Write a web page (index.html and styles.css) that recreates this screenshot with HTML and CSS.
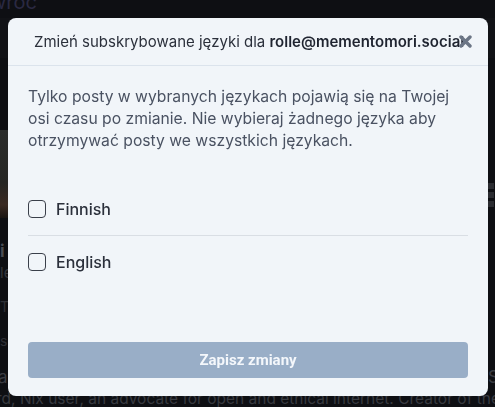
FILE: index.html
```html
<!DOCTYPE html>
<html lang="pl">
<head>
    <meta charset="UTF-8">
    <meta name="viewport" content="width=device-width, initial-scale=1.0">
    <title>Zmień subskrybowane języki</title>
    <link rel="stylesheet" href="styles.css">
</head>
<body>
    <!-- page behind the dialog -->
    <div class="page">
        <a class="backlink" href="#">wróć</a>
        <div class="topbar"></div>
        <div class="banner">
            <div class="banner-img"></div>
            <div class="banner-side">
                <span></span><span></span><span></span>
            </div>
        </div>
        <div class="profile">
            <div class="line name">i</div>
            <div class="line handle">le</div>
            <div class="line meta">T</div>
            <div class="line meta">s</div>
            <div class="line bio"><span>a</span><span>S</span></div>
            <div class="line bio-last">rd, Nix user, an advocate for open and ethical internet. Creator of the Mastodon</div>
        </div>
    </div>

    <div class="backdrop">
        <div class="modal">
            <div class="modal-header">
                <h2 class="modal-title">Zmień subskrybowane języki dla <b>rolle@mementomori.social</b></h2>
                <button class="close-btn" aria-label="Zamknij">
                    <svg width="13" height="13" viewBox="0 0 13 13">
                        <path d="M2 2 L11 11 M11 2 L2 11" stroke="currentColor" stroke-width="3.4" stroke-linecap="round"/>
                    </svg>
                </button>
            </div>

            <div class="modal-body">
                <p class="hint">Tylko posty w wybranych językach pojawią się na Twojej osi czasu po zmianie. Nie wybieraj żadnego języka aby otrzymywać posty we wszystkich językach.</p>

                <label class="lang-row">
                    <input type="checkbox" value="fi">
                    <span>Finnish</span>
                </label>
                <label class="lang-row">
                    <input type="checkbox" value="en">
                    <span>English</span>
                </label>

                <button class="save-btn" disabled>Zapisz zmiany</button>
            </div>
        </div>
    </div>
</body>
</html>
```

FILE: styles.css
```css
body {
    margin: 0;
    padding: 0;
    background-color: #0e0f13;
    font-family: Inter, "Noto Sans", sans-serif;
    overflow: hidden;
    height: 407px;
}

/* Page behind the dialog (dimmed) */
.page {
    color: #3b3d44;
}

.backlink {
    display: block;
    margin: -9px 0 0 -10px;
    font-size: 20px;
    line-height: 22px;
    color: #2a2942;
    text-decoration: none;
}

.topbar {
    height: 40px;
    margin-top: 5px;
    background-color: #111216;
}

.banner {
    display: flex;
    justify-content: space-between;
    margin-top: 72px;
    height: 88px;
}

.banner-img {
    width: 8px;
    background: linear-gradient(#2a2c2b 0%, #262624 60%, #3a2a22 85%, #1a1512 100%);
}

.banner-side {
    width: 8px;
    display: flex;
    flex-direction: column;
    gap: 3px;
    padding-top: 53px;
}

.banner-side span {
    display: block;
    width: 7px;
    height: 6px;
    background-color: #2a2c31;
}

.profile {
    white-space: nowrap;
}

.line {
    height: 22px;
    line-height: 22px;
}

.name {
    margin-top: 22px;
    font-size: 17px;
    font-weight: bold;
    color: #4a4c53;
}

.handle {
    font-size: 15px;
    color: #34363c;
}

.meta {
    margin-top: 12px;
    font-size: 14px;
    color: #2e3036;
}

.bio {
    margin-top: 14px;
    display: flex;
    justify-content: space-between;
    font-size: 17px;
    color: #3a3c42;
}

.bio span:first-child {
    margin-left: -2px;
}

.bio span:last-child {
    margin-right: -4px;
}

.bio-last {
    margin-left: -4px;
    font-size: 15.5px;
    color: #383a40;
}

/* Dialog */
.backdrop {
    position: fixed;
    inset: 0;
}

.modal {
    position: absolute;
    top: 18px;
    left: 8px;
    width: 480px;
    height: 378px;
    background-color: #f1f5f9;
    border-radius: 8px;
    overflow: hidden;
}

.modal-header {
    position: relative;
    height: 47px;
    border-bottom: 1px solid #dbe3ec;
    display: flex;
    align-items: center;
    padding-left: 26px;
}

.modal-title {
    margin: 0;
    font-size: 15px;
    font-weight: normal;
    color: #2b303b;
    white-space: nowrap;
}

.modal-title b {
    font-weight: 600;
    color: #1f2430;
}

.close-btn {
    position: absolute;
    top: 16px;
    right: 16px;
    width: 14px;
    height: 14px;
    padding: 0;
    border: none;
    background: transparent;
    color: #6b7585;
    cursor: pointer;
    display: flex;
    align-items: center;
    justify-content: center;
}

.modal-body {
    padding: 20px;
}

.hint {
    margin: 0 0 31px 0;
    font-size: 15.7px;
    line-height: 22px;
    color: #4a5262;
}

.lang-row {
    display: flex;
    align-items: center;
    gap: 10px;
    height: 52px;
    font-size: 16px;
    font-weight: 500;
    color: #2b303b;
    cursor: pointer;
}

.lang-row + .lang-row {
    border-top: 1px solid #d9dee4;
}

.lang-row input {
    appearance: none;
    margin: 0;
    width: 18px;
    height: 18px;
    border: 1.5px solid #3a3f4a;
    border-radius: 4px;
    background-color: transparent;
}

.save-btn {
    display: block;
    width: 100%;
    height: 36px;
    margin-top: 54px;
    border: none;
    border-radius: 4px;
    background-color: #99aec7;
    color: #f4f7fb;
    font-family: Roboto, "Liberation Sans", sans-serif;
    font-size: 15px;
    font-weight: bold;
}
```
